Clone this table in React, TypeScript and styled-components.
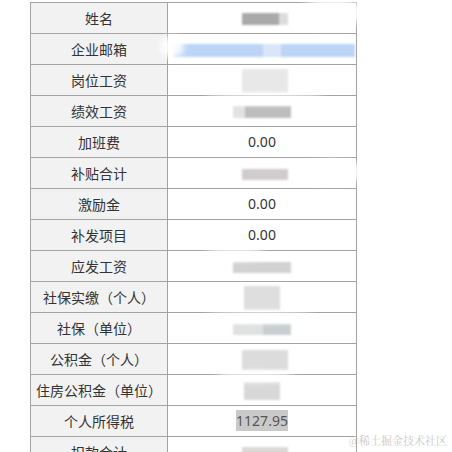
import React from "react";
import styled, { createGlobalStyle } from "styled-components";

const Global = createGlobalStyle`
  html, body { margin: 0; padding: 0; background: #fff; overflow: hidden; }
  body { width: 452px; height: 452px; font-family: "Noto Sans CJK SC", "Noto Sans", sans-serif; }
`;

const Page = styled.div`
  position: relative;
  width: 452px;
  height: 452px;
  overflow: hidden;
  padding: 2px 0 0 30px;
  box-sizing: border-box;
`;

const Table = styled.table`
  border-collapse: collapse;
  table-layout: fixed;
  width: 327px;
  color: #333;
  font-size: 14px;
`;

const LabelCell = styled.th`
  width: 136px;
  height: 30px;
  padding: 0;
  border: 1px solid #a3a3a3;
  background: #f2f2f2;
  font-weight: normal;
  text-align: center;
  font-family: "Noto Sans CJK SC", sans-serif;
  line-height: 30px;
  white-space: nowrap;
`;

const ValueCell = styled.td`
  width: 188px;
  height: 30px;
  padding: 0;
  border: 1px solid #a3a3a3;
  text-align: center;
  font-family: "Noto Sans", "Open Sans", sans-serif;
  font-size: 14px;
  line-height: 30px;
`;

const Selected = styled.span`
  background: #c9c9c9;
  color: #555;
  padding: 1px 0;
`;

const Redacted = styled.span`
  display: inline-flex;
  vertical-align: middle;
  filter: blur(1px);
`;

const Patch = styled.span<{ $w: number; $h: number; $c: string }>`
  display: block;
  width: ${(p) => p.$w}px;
  height: ${(p) => p.$h}px;
  background: ${(p) => p.$c};
`;

const Smear = styled.div<{ $x: number; $y: number; $w: number; $h: number }>`
  position: absolute;
  left: ${(p) => p.$x}px;
  top: ${(p) => p.$y}px;
  width: ${(p) => p.$w}px;
  height: ${(p) => p.$h}px;
  background: rgba(255, 255, 255, 0.9);
  border-radius: 50%;
  filter: blur(3px);
`;

const Watermark = styled.div`
  position: absolute;
  right: 5px;
  bottom: 4px;
  font-size: 11px;
  color: #c9c9c9;
  font-family: "Noto Serif CJK SC", "Noto Sans CJK SC", serif;
`;

type P = [number, number, string];
const blur = (parts: P[], shift = 0) => (
  <Redacted style={{ marginLeft: shift }}>
    {parts.map(([w, h, c], i) => (
      <Patch key={i} $w={w} $h={h} $c={c} />
    ))}
  </Redacted>
);

type Row = { label: string; value: React.ReactNode };

const rows: Row[] = [
  { label: "姓名", value: blur([[37, 12, "#a9a9a9"], [9, 12, "#dcdcdc"]], 6) },
  {
    label: "企业邮箱",
    value: blur([[90, 13, "#bcd5f7"], [18, 13, "#d9e6f8"], [74, 13, "#bcd5f7"]], 4),
  },
  { label: "岗位工资", value: blur([[46, 24, "#e8e8e8"]], 6) },
  { label: "绩效工资", value: blur([[12, 12, "#e2e2e2"], [46, 12, "#bdbdbd"]]) },
  { label: "加班费", value: "0.00" },
  { label: "补贴合计", value: blur([[46, 11, "#d0cccd"]], 6) },
  { label: "激励金", value: "0.00" },
  { label: "补发项目", value: "0.00" },
  { label: "应发工资", value: blur([[58, 11, "#d2d2d2"]]) },
  { label: "社保实缴（个人）", value: blur([[36, 24, "#dedede"]], 0) },
  { label: "社保（单位）", value: blur([[30, 11, "#dfe1e1"], [28, 11, "#c9cfd1"]]) },
  { label: "公积金（个人）", value: blur([[46, 20, "#dcdcdc"]], 6) },
  { label: "住房公积金（单位）", value: blur([[36, 18, "#d8d8d8"]], 0) },
  { label: "个人所得税", value: <Selected>1127.95</Selected> },
  { label: "扣款合计", value: blur([[46, 12, "#dcd8d6"]], 6) },
];

const smears = [
  { x: 300, y: -2, w: 65, h: 30 },
  { x: 160, y: 36, w: 24, h: 22 },
  { x: 205, y: 94, w: 120, h: 10 },
  { x: 300, y: 160, w: 65, h: 24 },
  { x: 205, y: 248, w: 60, h: 12 },
  { x: 205, y: 312, w: 110, h: 10 },
  { x: 215, y: 372, w: 80, h: 10 },
];

export default function App() {
  return (
    <Page>
      <Global />
      <Table>
        <tbody>
          {rows.map((r) => (
            <tr key={r.label}>
              <LabelCell>{r.label}</LabelCell>
              <ValueCell>{r.value}</ValueCell>
            </tr>
          ))}
        </tbody>
      </Table>
      {smears.map((s, i) => (
        <Smear key={"s" + i} $x={s.x} $y={s.y} $w={s.w} $h={s.h} />
      ))}
      <Watermark>@稀土掘金技术社区</Watermark>
    </Page>
  );
}
